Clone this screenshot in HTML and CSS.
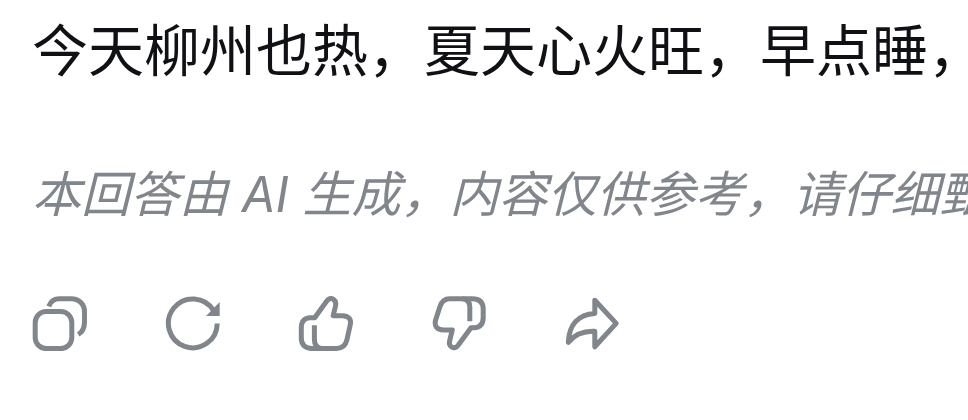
FILE: index.html
```html
<!DOCTYPE html>
<html lang="zh-CN">
<head>
	<meta charset="utf-8">
	<meta name="viewport" content="width=device-width, initial-scale=1">
	<title>回答</title>
	<link rel="stylesheet" href="styles.css">
</head>
<body>
	<main class="answer">
		<p class="answer-text">今天柳州也热，夏天心火旺，早点睡，</p>
		<p class="answer-note">本回答由 AI 生成，内容仅供参考，请仔细甄</p>
		<div class="actions">
			<button type="button" class="action" aria-label="复制">
				<svg class="icon" viewBox="0 0 56 56">
					<rect x="3.2" y="16.6" width="36.6" height="37" rx="11"/>
					<path d="M16.8 11.3C18.6 6.2 22.4 3.7 27.5 3.7H39C47 3.7 52.5 9 52.5 17V27C52.5 33.2 51 36.8 46.2 39.4"/>
				</svg>
			</button>
			<button type="button" class="action" aria-label="重新生成">
				<svg class="icon" viewBox="0 0 56 56">
					<path d="M52.2 28.4A24.4 24.4 0 1 1 48.6 15.6"/>
					<path class="solid" d="M54.7 7V21H41Z"/>
				</svg>
			</button>
			<button type="button" class="action" aria-label="赞">
				<svg class="icon" viewBox="0 0 56 56">
					<path d="M3.3 33C3.3 26.5 6.5 22.7 12 22.7H16.7L28.6 6.2C30.4 3.7 33 2.7 35.4 4.3C37.8 5.9 38.2 8.2 37.5 11L35.2 20.7H44.5C50.5 20.7 53.5 24.5 52.3 29.5L49 44.5C47.7 50.5 44.5 53.4 38.5 53.4H14C7 53.4 3.3 49.8 3.3 43Z"/>
					<path d="M16.4 30.3V44.5C16.4 49.5 18.5 52.5 23 53.4"/>
				</svg>
			</button>
			<button type="button" class="action" aria-label="踩">
				<svg class="icon" viewBox="0 0 56 56">
					<path d="M18.5 3.7H41C48.5 3.7 52.2 7 52.2 14V22.5C52.2 29 49 32.5 43 32.7H40L27.5 49.8C25.5 52.7 22.7 53.5 20.3 51.8C18.2 50.3 18 48.2 18.7 45.5L21.3 35H12.5C6 35 3 31 4.6 25L9 11.5C10.7 6.3 13.5 3.7 18.5 3.7Z"/>
					<path d="M31.5 3.7C36.4 4.3 38.8 7.3 38.8 12V26.3"/>
				</svg>
			</button>
			<button type="button" class="action" aria-label="分享">
				<svg class="icon" viewBox="0 0 56 56">
					<path d="M30.8 5.2L52.2 28.4L30.8 51.8V36.3C19.5 35.8 11.2 38.8 4.3 47.3C5 29.5 14.5 19.3 30.8 18.4Z"/>
				</svg>
			</button>
		</div>
	</main>
</body>
</html>
```

FILE: styles.css
```css
* {
	margin: 0;
	padding: 0;
	box-sizing: border-box;
}

body {
	background: #fff;
	color: #0f1115;
	font-family: Inter, "Noto Sans CJK SC", sans-serif;
}

.answer {
	padding: 7px 0 64px 32px;
	overflow: hidden;
}

.answer-text {
	font-size: 56px;
	line-height: 88px;
	white-space: nowrap;
}

.answer-note {
	margin-top: 56px;
	color: #81858c;
	font-size: 49px;
	font-style: italic;
	line-height: 88px;
	white-space: nowrap;
}

.actions {
	display: flex;
	gap: 77px;
	margin-top: 56px;
}

.action {
	width: 56px;
	height: 56px;
	border: 0;
	background: none;
	color: #81858c;
	cursor: pointer;
}

.icon {
	display: block;
	width: 100%;
	height: 100%;
	fill: none;
	stroke: currentColor;
	stroke-width: 5;
	stroke-linejoin: round;
}

.icon .solid {
	fill: currentColor;
	stroke: none;
}
```
